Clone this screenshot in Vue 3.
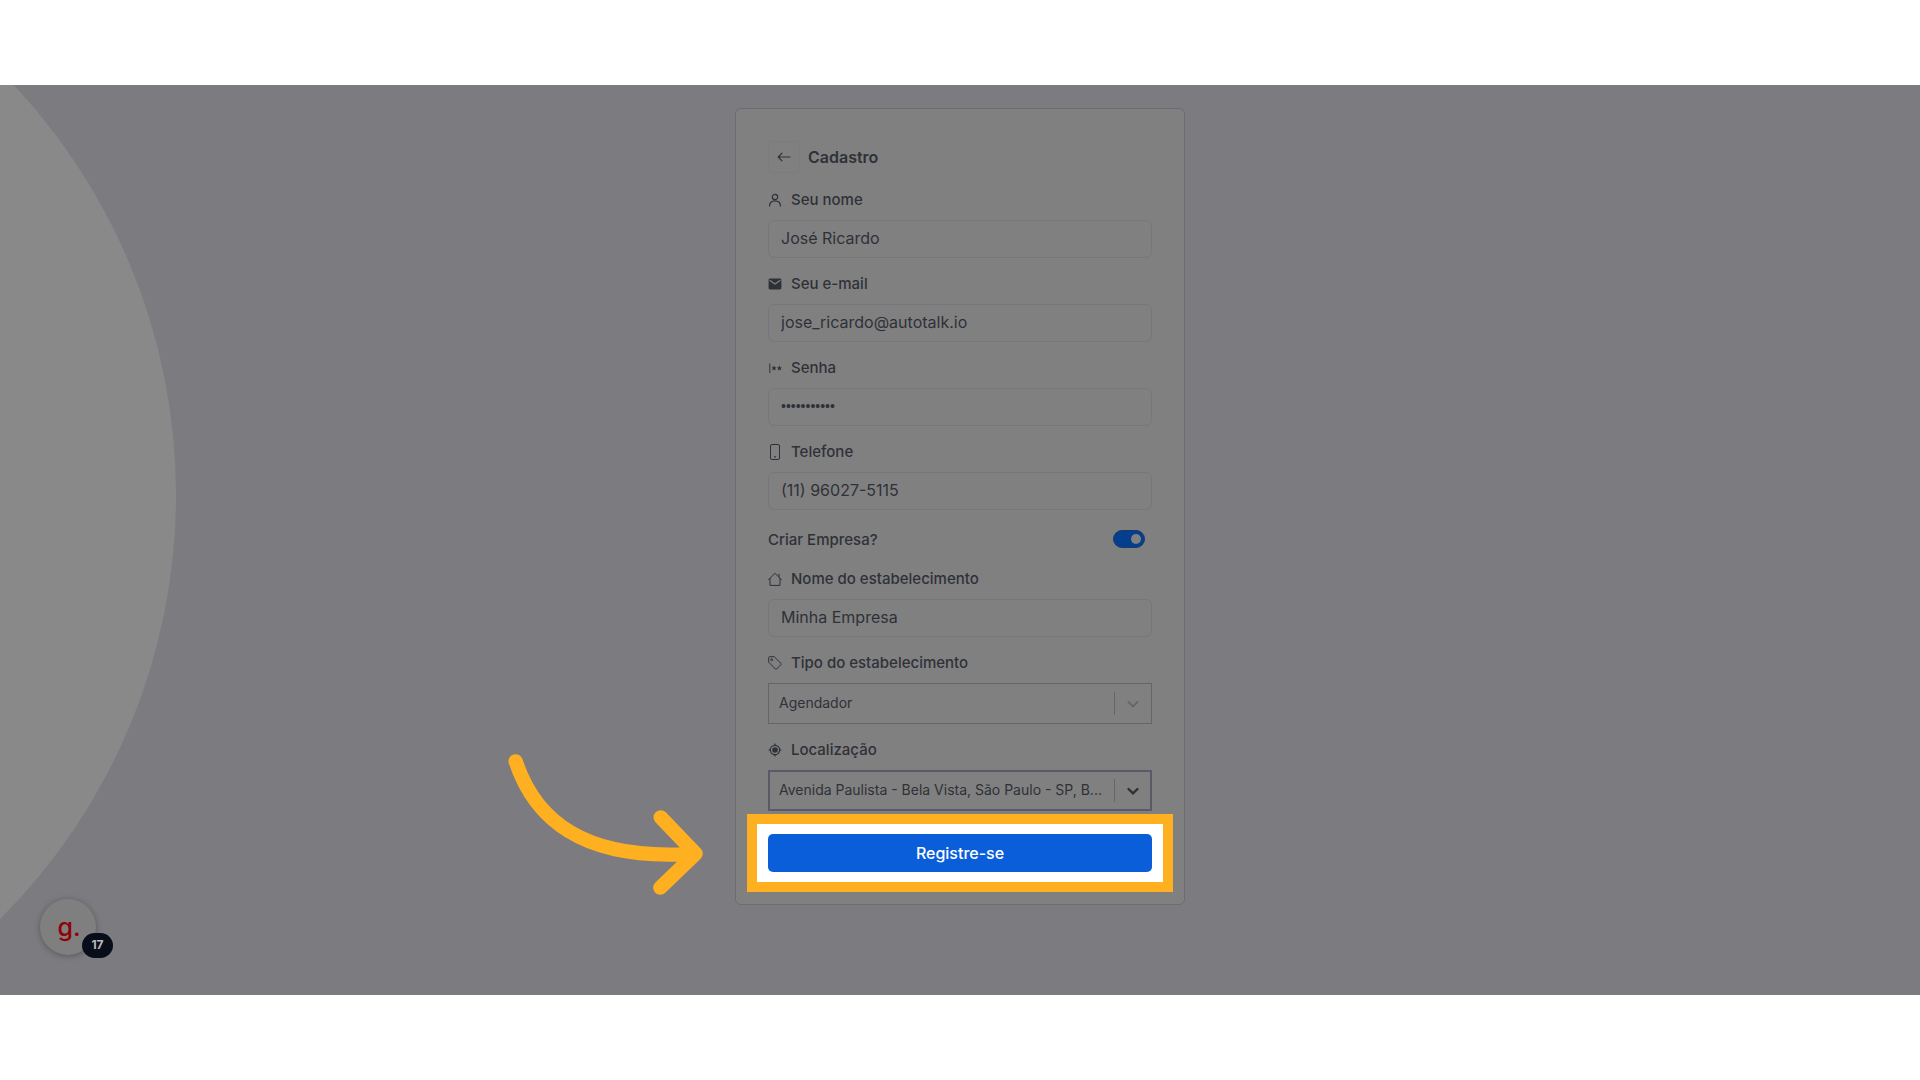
<script setup>
import { ref } from 'vue'

const name = ref('José Ricardo')
const email = ref('jose_ricardo@autotalk.io')
const password = ref('senha123456')
const phone = ref('(11) 96027-5115')
const createCompany = ref(true)
const company = ref('Minha Empresa')
const kind = ref('Agendador')
const place = ref('Avenida Paulista - Bela Vista, São Paulo - SP, B...')
</script>

<template>
  <div class="page">
    <main class="stage">
      <div class="disc"></div>

      <form class="card" @submit.prevent>
        <header class="head">
          <button type="button" class="back" aria-label="Voltar">
            <svg viewBox="0 0 14 14" width="14" height="14" fill="none" stroke="currentColor" stroke-width="1.2" stroke-linecap="round" stroke-linejoin="round">
              <path d="M13 7H1.500M5 3.200 1.200 7 5 10.800" />
            </svg>
          </button>
          <h1>Cadastro</h1>
        </header>

        <div class="field">
          <label for="name">
            <svg class="icon" viewBox="0 0 14 14" fill="none" stroke="currentColor" stroke-width="1.200">
              <circle cx="7" cy="4" r="2.700" />
              <path d="M1.500 13.500C1.500 10 3.500 7.900 7 7.900s5.500 2.100 5.500 5.600" />
            </svg>
            Seu nome
          </label>
          <input id="name" v-model="name" class="box" type="text" />
        </div>

        <div class="field">
          <label for="email">
            <svg class="icon" viewBox="0 0 14 14">
              <path fill="currentColor" d="M2 1.500h10c.8 0 1.400.6 1.400 1.400v8.200c0 .8-.6 1.400-1.400 1.400H2c-.8 0-1.400-.6-1.400-1.400V2.900C.6 2.100 1.200 1.500 2 1.500z" />
              <path fill="none" stroke="#808080" stroke-width="1.200" d="M1.600 3.300 7 7l5.400-3.700" />
            </svg>
            Seu e-mail
          </label>
          <input id="email" v-model="email" class="box" type="email" />
        </div>

        <div class="field">
          <label for="password">
            <svg class="icon" viewBox="0 0 14 14" fill="currentColor">
              <path d="M1.300 2.500h1v9.500h-1z" />
              <path d="M6 4.600l.8 1.600 1.700.2-1.300 1.200.4 1.800L6 8.500l-1.600.9.4-1.800-1.300-1.200 1.700-.2z" />
              <path d="M11.400 4.600l.8 1.600 1.700.2-1.300 1.200.4 1.800-1.600-.9-1.600.9.4-1.800-1.300-1.200 1.700-.2z" />
            </svg>
            Senha
          </label>
          <input id="password" v-model="password" class="box secret" type="password" />
        </div>

        <div class="field">
          <label for="phone">
            <svg class="icon tall" viewBox="0 0 14 16" fill="none" stroke="currentColor">
              <rect x="2.500" y=".5" width="9" height="15" rx="1.500" />
              <circle cx="7" cy="12.800" r=".9" fill="currentColor" stroke="none" />
            </svg>
            Telefone
          </label>
          <input id="phone" v-model="phone" class="box" type="tel" />
        </div>

        <div class="toggle">
          <label for="create">Criar Empresa?</label>
          <input id="create" v-model="createCompany" type="checkbox" role="switch" />
        </div>

        <div class="field">
          <label for="company">
            <svg class="icon" viewBox="0 0 14 14" fill="none" stroke="currentColor" stroke-linejoin="round" stroke-linecap="round">
              <path d="M.6 7.600 7 1.200l6.400 6.400M2 6.500v6.900h10V6.500M11 5V2.200" />
            </svg>
            Nome do estabelecimento
          </label>
          <input id="company" v-model="company" class="box" type="text" />
        </div>

        <div class="field">
          <label for="kind">
            <svg class="icon" viewBox="0 0 14 14" fill="none" stroke="currentColor" stroke-linejoin="round">
              <path d="M.7 1.500c0-.5.300-.8.800-.8h4.700l6.900 6.800c.3.300.3.700 0 1l-4.600 4.600c-.3.300-.7.300-1 0L.7 6.200z" />
              <circle cx="3.700" cy="3.700" r="1" />
            </svg>
            Tipo do estabelecimento
          </label>
          <div class="picker">
            <select id="kind" v-model="kind">
              <option>Agendador</option>
            </select>
            <span class="caret">
              <svg viewBox="0 0 20 20" width="20" height="20" fill="none" stroke="currentColor" stroke-width="2" stroke-linecap="round">
                <path d="M5.500 8 10 12.400 14.500 8" />
              </svg>
            </span>
          </div>
        </div>

        <div class="field">
          <label for="place">
            <svg class="icon" viewBox="0 0 14 14" fill="none" stroke="currentColor" stroke-width="1.200">
              <circle cx="7" cy="7" r="4.700" />
              <circle cx="7" cy="7" r="2.800" fill="currentColor" stroke="none" />
              <path d="M7 .5v2M7 11.500v2M.5 7h2M11.500 7h2" />
            </svg>
            Localização
          </label>
          <div class="picker active">
            <select id="place" v-model="place">
              <option>Avenida Paulista - Bela Vista, São Paulo - SP, B...</option>
            </select>
            <span class="caret">
              <svg viewBox="0 0 20 20" width="20" height="20" fill="none" stroke="currentColor" stroke-width="2.400" stroke-linecap="round">
                <path d="M5.500 8 10 12.400 14.500 8" />
              </svg>
            </span>
          </div>
        </div>

        <div class="spotlight">
          <button type="submit" class="submit">Registre-se</button>
        </div>

        <svg class="arrow" viewBox="0 0 780 570" fill="none" stroke="#ffb020" stroke-width="43" stroke-linecap="round" stroke-linejoin="round">
          <path d="M107 94C165 270 310 395 645 371M542 262 647 371 541 473" />
        </svg>
      </form>

      <button type="button" class="launcher" aria-label="Guias">
        <span class="mark">g.</span>
        <span class="count">17</span>
      </button>
    </main>
  </div>
</template>

<style>
body {
  margin: 0;
  background: #fff;
}
</style>

<style scoped>
* {
  box-sizing: border-box;
}

.page {
  padding: 85px 0;
  font-family: Inter, "Liberation Sans", sans-serif;
  font-size: 14px;
  color: #2f3138;
}

.stage {
  position: relative;
  overflow: hidden;
  padding: 23px 16px 90px;
  background: #7c7b80;
}

.disc {
  position: absolute;
  left: -1022px;
  top: -189px;
  width: 1198px;
  height: 1198px;
  border-radius: 50%;
  background: #89898a;
}

.card {
  position: relative;
  max-width: 450px;
  margin: 0 auto;
  padding: 32px 32px 12px;
  border: 1px solid #6c6b6f;
  border-radius: 6px;
  background: #808080;
}

.head {
  display: flex;
  align-items: center;
  gap: 8px;
  margin-bottom: 16px;
}

.back {
  display: grid;
  place-items: center;
  width: 32px;
  height: 32px;
  padding: 0;
  border: 1px solid #7c7c7d;
  border-radius: 4px;
  background: none;
  color: inherit;
}

h1 {
  margin: 0;
  font-size: 16px;
  line-height: 20px;
  font-weight: 600;
}

.field {
  margin-bottom: 15px;
}

.field label {
  display: flex;
  align-items: center;
  gap: 9px;
  margin-bottom: 9px;
  line-height: 22px;
}

label {
  font-size: 15px;
  font-weight: 500;
}

.icon {
  flex: none;
  width: 14px;
  height: 14px;
}

.icon.tall {
  height: 16px;
}

.box {
  display: block;
  width: 100%;
  height: 38px;
  padding: 0 12px 2px;
  border: 1px solid #77767c;
  border-radius: 6px;
  outline: none;
  background: none;
  font: inherit;
  font-size: 16px;
  color: inherit;
}

.box.secret {
  font-family: "Liberation Sans", sans-serif;
  font-size: 14px;
}

.toggle {
  display: flex;
  align-items: center;
  justify-content: space-between;
  height: 28px;
  margin-bottom: 15px;
  padding-right: 7px;
}

.toggle input {
  display: flex;
  align-items: center;
  justify-content: flex-end;
  appearance: none;
  width: 32px;
  height: 18px;
  margin: 0;
  padding: 3px;
  border: 1px solid #1c3a68;
  border-radius: 9px;
  background: #063e8e;
}

.toggle input::before {
  content: "";
  width: 10px;
  height: 10px;
  border-radius: 50%;
  background: #808080;
}

.picker {
  position: relative;
}

.picker select {
  display: block;
  appearance: none;
  width: 100%;
  height: 41px;
  padding: 0 40px 2px 10px;
  border: 1px solid #666;
  border-radius: 0;
  outline: none;
  background: none;
  font: inherit;
  color: inherit;
}

.picker.active select {
  padding: 0 39px 2px 9px;
  border: 2px solid #5b5868;
}

.caret {
  position: absolute;
  right: 1px;
  top: 9px;
  bottom: 9px;
  display: grid;
  place-items: center;
  width: 37px;
  border-left: 1px solid #666;
  color: #666;
  pointer-events: none;
}

.active .caret {
  color: #2f3032;
}

.spotlight {
  margin: -12px -21px 0;
  padding: 10px 11px;
  border: 10px solid #ffb020;
  background: #fff;
}

.submit {
  display: block;
  width: 100%;
  height: 38px;
  padding: 0;
  border: 0;
  border-radius: 5px;
  background: #0b5ed9;
  color: #fff;
  font: inherit;
  font-size: 16px;
  font-weight: 500;
}

.arrow {
  position: absolute;
  right: 100%;
  bottom: -16px;
  width: 260px;
  height: 190px;
  margin-right: -4px;
  pointer-events: none;
}

.launcher {
  position: absolute;
  left: 40px;
  bottom: 40px;
  width: 56px;
  height: 56px;
  padding: 0;
  border: 0;
  border-radius: 50%;
  background: #7f7f7f;
  box-shadow: 0 1px 6px #0000004d;
  font: inherit;
}

.mark {
  display: block;
  padding-left: 2px;
  font-size: 25px;
  line-height: 46px;
  font-weight: 500;
  color: #8f0308;
}

.count {
  position: absolute;
  left: 42px;
  top: 34px;
  width: 31px;
  height: 25px;
  border-radius: 13px;
  background: #080e19;
  color: #b9bbc0;
  font-size: 12px;
  line-height: 24px;
  font-weight: 700;
}
</style>
